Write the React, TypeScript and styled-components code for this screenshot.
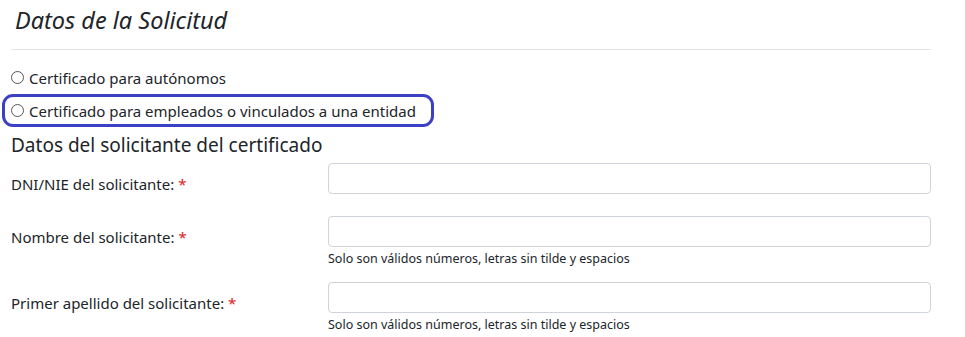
import styled, { createGlobalStyle } from 'styled-components';

const GlobalStyle = createGlobalStyle`
	body {
		margin: 0;
		background: #ffffff;
		font-family: 'Noto Sans', 'Open Sans', sans-serif;
		color: #212529;
	}
`;

const fields = [
	{ label: 'DNI/NIE del solicitante:', help: '' },
	{
		label: 'Nombre del solicitante:',
		help: 'Solo son válidos números, letras sin tilde y espacios',
	},
	{
		label: 'Primer apellido del solicitante:',
		help: 'Solo son válidos números, letras sin tilde y espacios',
	},
];

export default function App() {
	return (
		<>
			<GlobalStyle />
			<Page>
				<Title>Datos de la Solicitud</Title>
				<Divider />
				<RadioList>
					<RadioOption>
						<Circle />
						Certificado para autónomos
					</RadioOption>
					<RadioOption highlighted>
						<Circle />
						Certificado para empleados o vinculados a una entidad
					</RadioOption>
				</RadioList>
				<SubTitle>Datos del solicitante del certificado</SubTitle>
				<Form>
					{fields.map((f) => (
						<FormRow key={f.label}>
							<Label>
								{f.label} <Required>*</Required>
							</Label>
							<Field>
								<TextInput type='text' />
								{f.help && <Help>{f.help}</Help>}
							</Field>
						</FormRow>
					))}
				</Form>
			</Page>
		</>
	);
}

const Page = styled.div`
	width: 920px;
	padding: 0 0 0 11px;
`;

const Title = styled.h2`
	margin: 0;
	padding: 5px 0 0 4px;
	font-size: 23.5px;
	font-style: italic;
	font-weight: 400;
	line-height: 30px;
	color: #212529;
`;

const Divider = styled.hr`
	margin: 14px 0 0 0;
	border: 0;
	border-top: 1px solid #e3e3e3;
`;

const RadioList = styled.div`
	display: flex;
	flex-direction: column;
	margin-top: 11px;
	margin-left: -11px;
`;

const RadioOption = styled.label<{ highlighted?: boolean }>`
	display: flex;
	align-items: center;
	gap: 5px;
	width: fit-content;
	height: 27px;
	border: 3px solid ${(p) => (p.highlighted ? '#3b40c4' : 'transparent')};
	border-radius: 11px;
	font-size: 15px;
	color: #212529;
	margin-left: ${(p) => (p.highlighted ? '2px' : '0')};
	padding: 0 15px 0 ${(p) => (p.highlighted ? '6px' : '8px')};
`;

const Circle = styled.span`
	display: inline-block;
	width: 11px;
	height: 11px;
	border: 1px solid #555;
	border-radius: 50%;
	flex-shrink: 0;
`;

const SubTitle = styled.h3`
	margin: 5px 0 0 0;
	font-size: 19px;
	font-weight: 400;
	line-height: 26px;
	color: #212529;
`;

const Form = styled.div`
	display: flex;
	flex-direction: column;
	margin-top: 5px;
`;

const FormRow = styled.div`
	display: grid;
	grid-template-columns: 317px 1fr;
	margin-bottom: 15px;
`;

const Label = styled.div`
	padding-top: 10px;
	font-size: 15px;
	line-height: 22px;
	color: #212529;
`;

const Required = styled.span`
	color: #e02020;
`;

const Field = styled.div`
	display: flex;
	flex-direction: column;
	min-height: 38px;
`;

const TextInput = styled.input`
	box-sizing: border-box;
	width: 603px;
	height: 31px;
	border: 1px solid #ced4da;
	border-radius: 4px;
	outline: none;
`;

const Help = styled.div`
	margin-top: 3px;
	font-size: 12.5px;
	line-height: 17px;
	color: #212529;
`;
